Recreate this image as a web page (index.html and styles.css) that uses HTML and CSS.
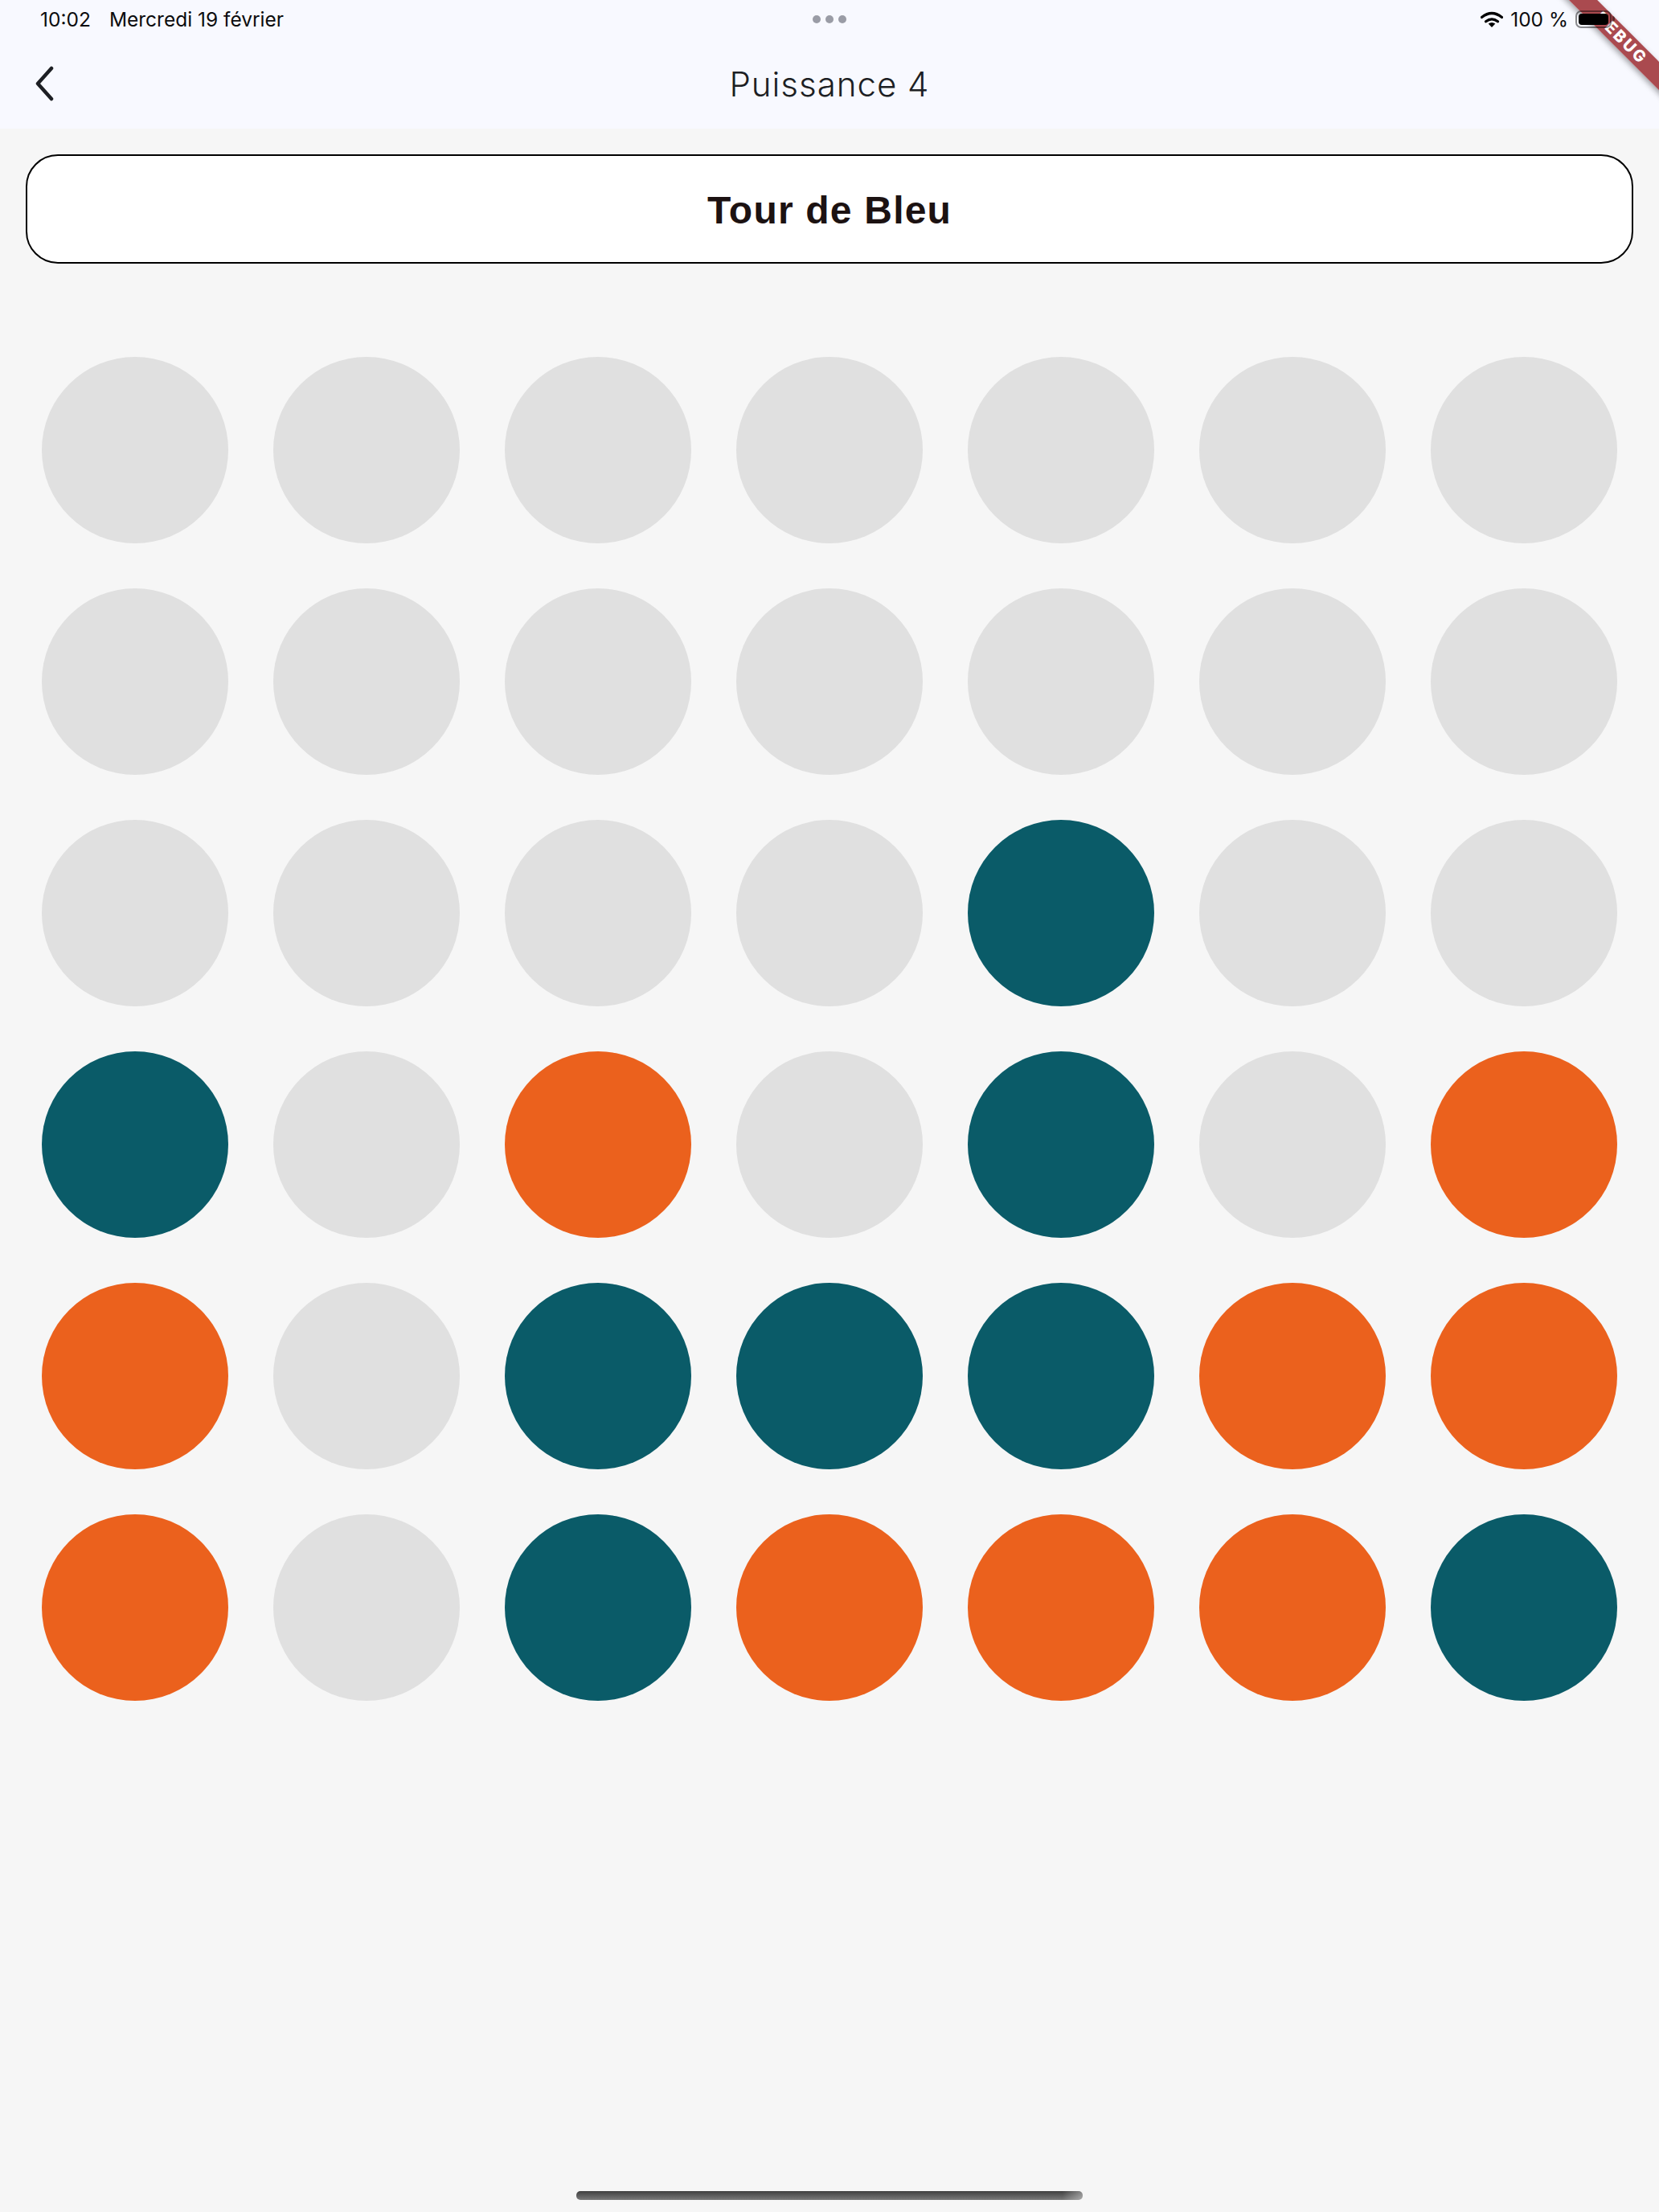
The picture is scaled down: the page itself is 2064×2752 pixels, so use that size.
FILE: index.html
```html
<!DOCTYPE html>
<html lang="fr">
<head>
    <meta charset="UTF-8">
    <title>Puissance 4</title>
    <link rel="stylesheet" href="styles.css">
</head>
<body>
    <header class="top-bar">
        <div class="debug-banner"><span>DEBUG</span></div>
        <div class="status-bar">
            <div class="status-left">
                <span>10:02</span>
                <span>Mercredi 19 février</span>
            </div>
            <div class="status-dots"><i></i><i></i><i></i></div>
            <div class="status-right">
                <svg class="wifi" viewBox="0 0 28 20" width="28" height="20">
                    <path d="M1.500 7.500Q14 -2.500 26.500 7.500" fill="none" stroke="#000" stroke-width="3.200" stroke-linecap="round"/>
                    <path d="M6.500 12.800Q14 6.800 21.500 12.800" fill="none" stroke="#000" stroke-width="3.200" stroke-linecap="round"/>
                    <path d="M14 20L9.700 15.600Q14 12.500 18.300 15.600Z" fill="#000"/>
                </svg>
                <span>100 %</span>
                <div class="battery"><div class="battery-level"></div></div>
            </div>
        </div>
        <div class="nav-bar">
            <svg class="back" viewBox="0 0 24 44" width="24" height="44">
                <path d="M21 3L4 22L21 41" fill="none" stroke="#1d1f24" stroke-width="4.500" stroke-linecap="round" stroke-linejoin="round"/>
            </svg>
            <h1 class="title">Puissance 4</h1>
        </div>
    </header>

    <main class="game">
        <div class="turn-card">Tour de Bleu</div>
        <div class="board">
            <div class="cell"></div><div class="cell"></div><div class="cell"></div><div class="cell"></div><div class="cell"></div><div class="cell"></div><div class="cell"></div>
            <div class="cell"></div><div class="cell"></div><div class="cell"></div><div class="cell"></div><div class="cell"></div><div class="cell"></div><div class="cell"></div>
            <div class="cell"></div><div class="cell"></div><div class="cell"></div><div class="cell"></div><div class="cell blue"></div><div class="cell"></div><div class="cell"></div>
            <div class="cell blue"></div><div class="cell"></div><div class="cell orange"></div><div class="cell"></div><div class="cell blue"></div><div class="cell"></div><div class="cell orange"></div>
            <div class="cell orange"></div><div class="cell"></div><div class="cell blue"></div><div class="cell blue"></div><div class="cell blue"></div><div class="cell orange"></div><div class="cell orange"></div>
            <div class="cell orange"></div><div class="cell"></div><div class="cell blue"></div><div class="cell orange"></div><div class="cell orange"></div><div class="cell orange"></div><div class="cell blue"></div>
        </div>
    </main>

    <div class="home-indicator"></div>
</body>
</html>
```

FILE: styles.css
```css
html, body {
    margin: 0;
    height: 100%;
}

body {
    height: 2752px;
    overflow: hidden;
    display: flex;
    flex-direction: column;
    position: relative;
    background-color: #f6f6f6;
    font-family: Inter, "Noto Sans", sans-serif;
}

.top-bar {
    height: 160px;
    background-color: #f8f9ff;
    position: relative;
    overflow: hidden;
    flex-shrink: 0;
}

/* la barre de statut passe au-dessus du bandeau */
.status-bar {
    height: 48px;
    padding: 0 59px 0 50px;
    display: flex;
    align-items: center;
    justify-content: space-between;
    position: relative;
    z-index: 2;
    font-size: 24.5px;
    color: #0c0c0e;
}

.status-left {
    display: flex;
    gap: 23px;
}

.status-dots {
    position: absolute;
    left: 1011px;
    top: 19px;
    display: flex;
    gap: 6px;
}

.status-dots i {
    width: 10px;
    height: 10px;
    border-radius: 50%;
    background-color: #9a9ca6;
}

.status-right {
    display: flex;
    align-items: center;
    gap: 9px;
}

.wifi {
    margin-top: -1px;
}

.battery {
    width: 45px;
    height: 22px;
    box-sizing: border-box;
    padding: 2px;
    border: 2px solid rgba(0, 0, 0, 0.45);
    border-radius: 7px;
    position: relative;
}

.battery::after {
    content: "";
    position: absolute;
    right: -6px;
    top: 5px;
    width: 3px;
    height: 7px;
    border-radius: 0 3px 3px 0;
    background-color: rgba(0, 0, 0, 0.45);
}

.battery-level {
    height: 100%;
    background-color: #000;
    border-radius: 4px;
}

.nav-bar {
    height: 112px;
    display: flex;
    align-items: center;
    justify-content: center;
    position: relative;
}

.back {
    position: absolute;
    left: 43px;
    top: 34px;
}

.title {
    margin: 0;
    font-size: 42px;
    font-weight: 350;
    letter-spacing: 1px;
    color: #1d1f24;
}

.debug-banner {
    position: absolute;
    top: 35px;
    right: -53px;
    width: 200px;
    height: 25px;
    transform: rotate(45deg);
    background-color: rgba(150, 30, 35, 0.8);
    box-shadow: 0 3px 7px rgba(0, 0, 0, 0.35);
    color: #fff;
    font-size: 20px;
    font-weight: 800;
    letter-spacing: 2.500px;
    line-height: 25px;
    text-align: center;
}

.game {
    padding: 32px 32px 0;
    display: flex;
    flex-direction: column;
}

.turn-card {
    height: 136px;
    box-sizing: border-box;
    padding-top: 2px;
    border: 2px solid #000;
    border-radius: 40px;
    background-color: #fff;
    display: flex;
    align-items: center;
    justify-content: center;
    font-family: "Liberation Sans", sans-serif;
    font-size: 48px;
    font-weight: 700;
    letter-spacing: 1.200px;
    color: #1c1212;
}

.board {
    margin: 116px -20px 0;
    display: grid;
    grid-template-columns: repeat(7, 232px);
    gap: 56px;
    justify-content: center;
}

.cell {
    width: 232px;
    height: 232px;
    border-radius: 50%;
    background-color: #e0e0e0;
}

.cell.blue {
    background-color: #0a5b68;
}

.cell.orange {
    background-color: #eb611d;
}

.home-indicator {
    position: absolute;
    left: 717px;
    bottom: 15px;
    width: 630px;
    height: 11px;
    border-radius: 5px;
    background: linear-gradient(90deg, transparent 96%, rgba(245, 245, 245, 0.4)), linear-gradient(#3f3f3f, #7a7a7a);
}
```
